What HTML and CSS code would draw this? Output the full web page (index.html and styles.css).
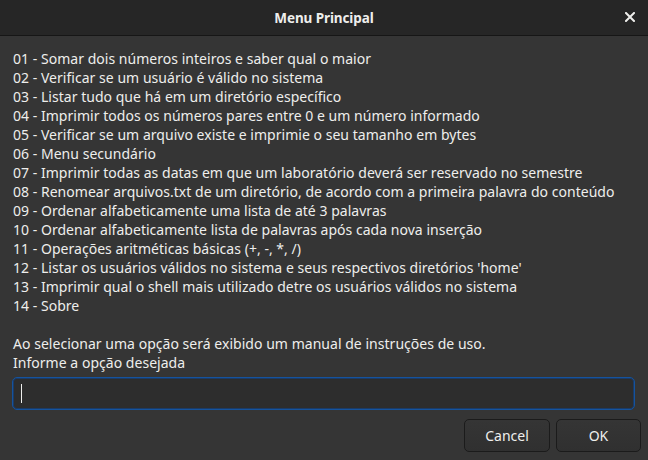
FILE: index.html
```html
<!DOCTYPE html>
<html lang="pt">
<head>
<meta charset="utf-8">
<title>Menu Principal</title>
<link rel="stylesheet" href="styles.css">
</head>
<body>
<div class="window">
  <header class="titlebar">
    <span class="title">Menu Principal</span>
    <button class="close" aria-label="Fechar">
      <svg width="10" height="10" viewBox="0 0 10 10"><path d="M1 1 L9 9 M9 1 L1 9" stroke="#eeeeec" stroke-width="2" stroke-linecap="square"/></svg>
    </button>
  </header>
  <main class="content">
    <div class="menu">
      <div>01 - Somar dois números inteiros e saber qual o maior</div>
      <div>02 - Verificar se um usuário é válido no sistema</div>
      <div>03 - Listar tudo que há em um diretório específico</div>
      <div>04 - Imprimir todos os números pares entre 0 e um número informado</div>
      <div>05 - Verificar se um arquivo existe e imprimie o seu tamanho em bytes</div>
      <div>06 - Menu secundário</div>
      <div>07 - Imprimir todas as datas em que um laboratório deverá ser reservado no semestre</div>
      <div>08 - Renomear arquivos.txt de um diretório, de acordo com a primeira palavra do conteúdo</div>
      <div>09 - Ordenar alfabeticamente uma lista de até 3 palavras</div>
      <div>10 - Ordenar alfabeticamente lista de palavras após cada nova inserção</div>
      <div>11 - Operações aritméticas básicas (+, -, *, /)</div>
      <div>12 - Listar os usuários válidos no sistema e seus respectivos diretórios 'home'</div>
      <div>13 - Imprimir qual o shell mais utilizado detre os usuários válidos no sistema</div>
      <div>14 - Sobre</div>
      <div class="blank">&nbsp;</div>
      <div>Ao selecionar uma opção será exibido um manual de instruções de uso.</div>
      <div>Informe a opção desejada</div>
    </div>
    <div class="entry"><span class="caret"></span></div>
    <div class="actions">
      <button class="btn cancel">Cancel</button>
      <button class="btn ok">OK</button>
    </div>
  </main>
</div>
</body>
</html>
```
FILE: styles.css
```css
* { box-sizing: border-box; }
html, body {
  margin: 0;
  padding: 0;
  width: 648px;
  height: 460px;
  background: #353535;
  font-family: "Noto Sans", "Open Sans", sans-serif;
  color: #eeeeec;
}
.window {
  width: 648px;
  height: 460px;
  display: flex;
  flex-direction: column;
  background: #353535;
}
.titlebar {
  height: 36px;
  flex: none;
  background: #262626;
  border-bottom: 1px solid #161616;
  display: flex;
  align-items: center;
  justify-content: center;
  position: relative;
}
.title {
  font-weight: bold;
  font-size: 13.5px;
  color: #eeeeec;
  letter-spacing: -0.1px;
}
.close {
  position: absolute;
  right: 13px;
  top: 12px;
  width: 10px;
  height: 10px;
  padding: 0;
  border: 0;
  background: none;
  display: flex;
}
.content {
  flex: 1;
  display: flex;
  flex-direction: column;
  padding: 13px 7px 8px 13px;
}
.menu {
  font-size: 14px;
  line-height: 19px;
  letter-spacing: 0.03px;
  white-space: nowrap;
}
.entry {
  margin-top: 5px;
  margin-right: 6px;
  margin-left: -1px;
  height: 33px;
  background: #2d2d2d;
  border: 1px solid #15539e;
  border-radius: 5px;
  box-shadow: inset 0 0 0 1px #1b3b66;
  display: flex;
  align-items: center;
  padding-left: 8px;
}
.caret {
  width: 1px;
  height: 19px;
  background: #eeeeec;
}
.actions {
  margin-top: 9px;
  display: flex;
  justify-content: flex-end;
  gap: 6px;
}
.btn {
  height: 33px;
  border: 1px solid #1b1b1b;
  border-radius: 5px;
  background: linear-gradient(#353535, #303030);
  color: #eeeeec;
  font-family: "Noto Sans", "Open Sans", sans-serif;
  font-size: 14px;
  padding: 0;
}
.cancel { width: 86px; }
.ok { width: 85px; }
```
